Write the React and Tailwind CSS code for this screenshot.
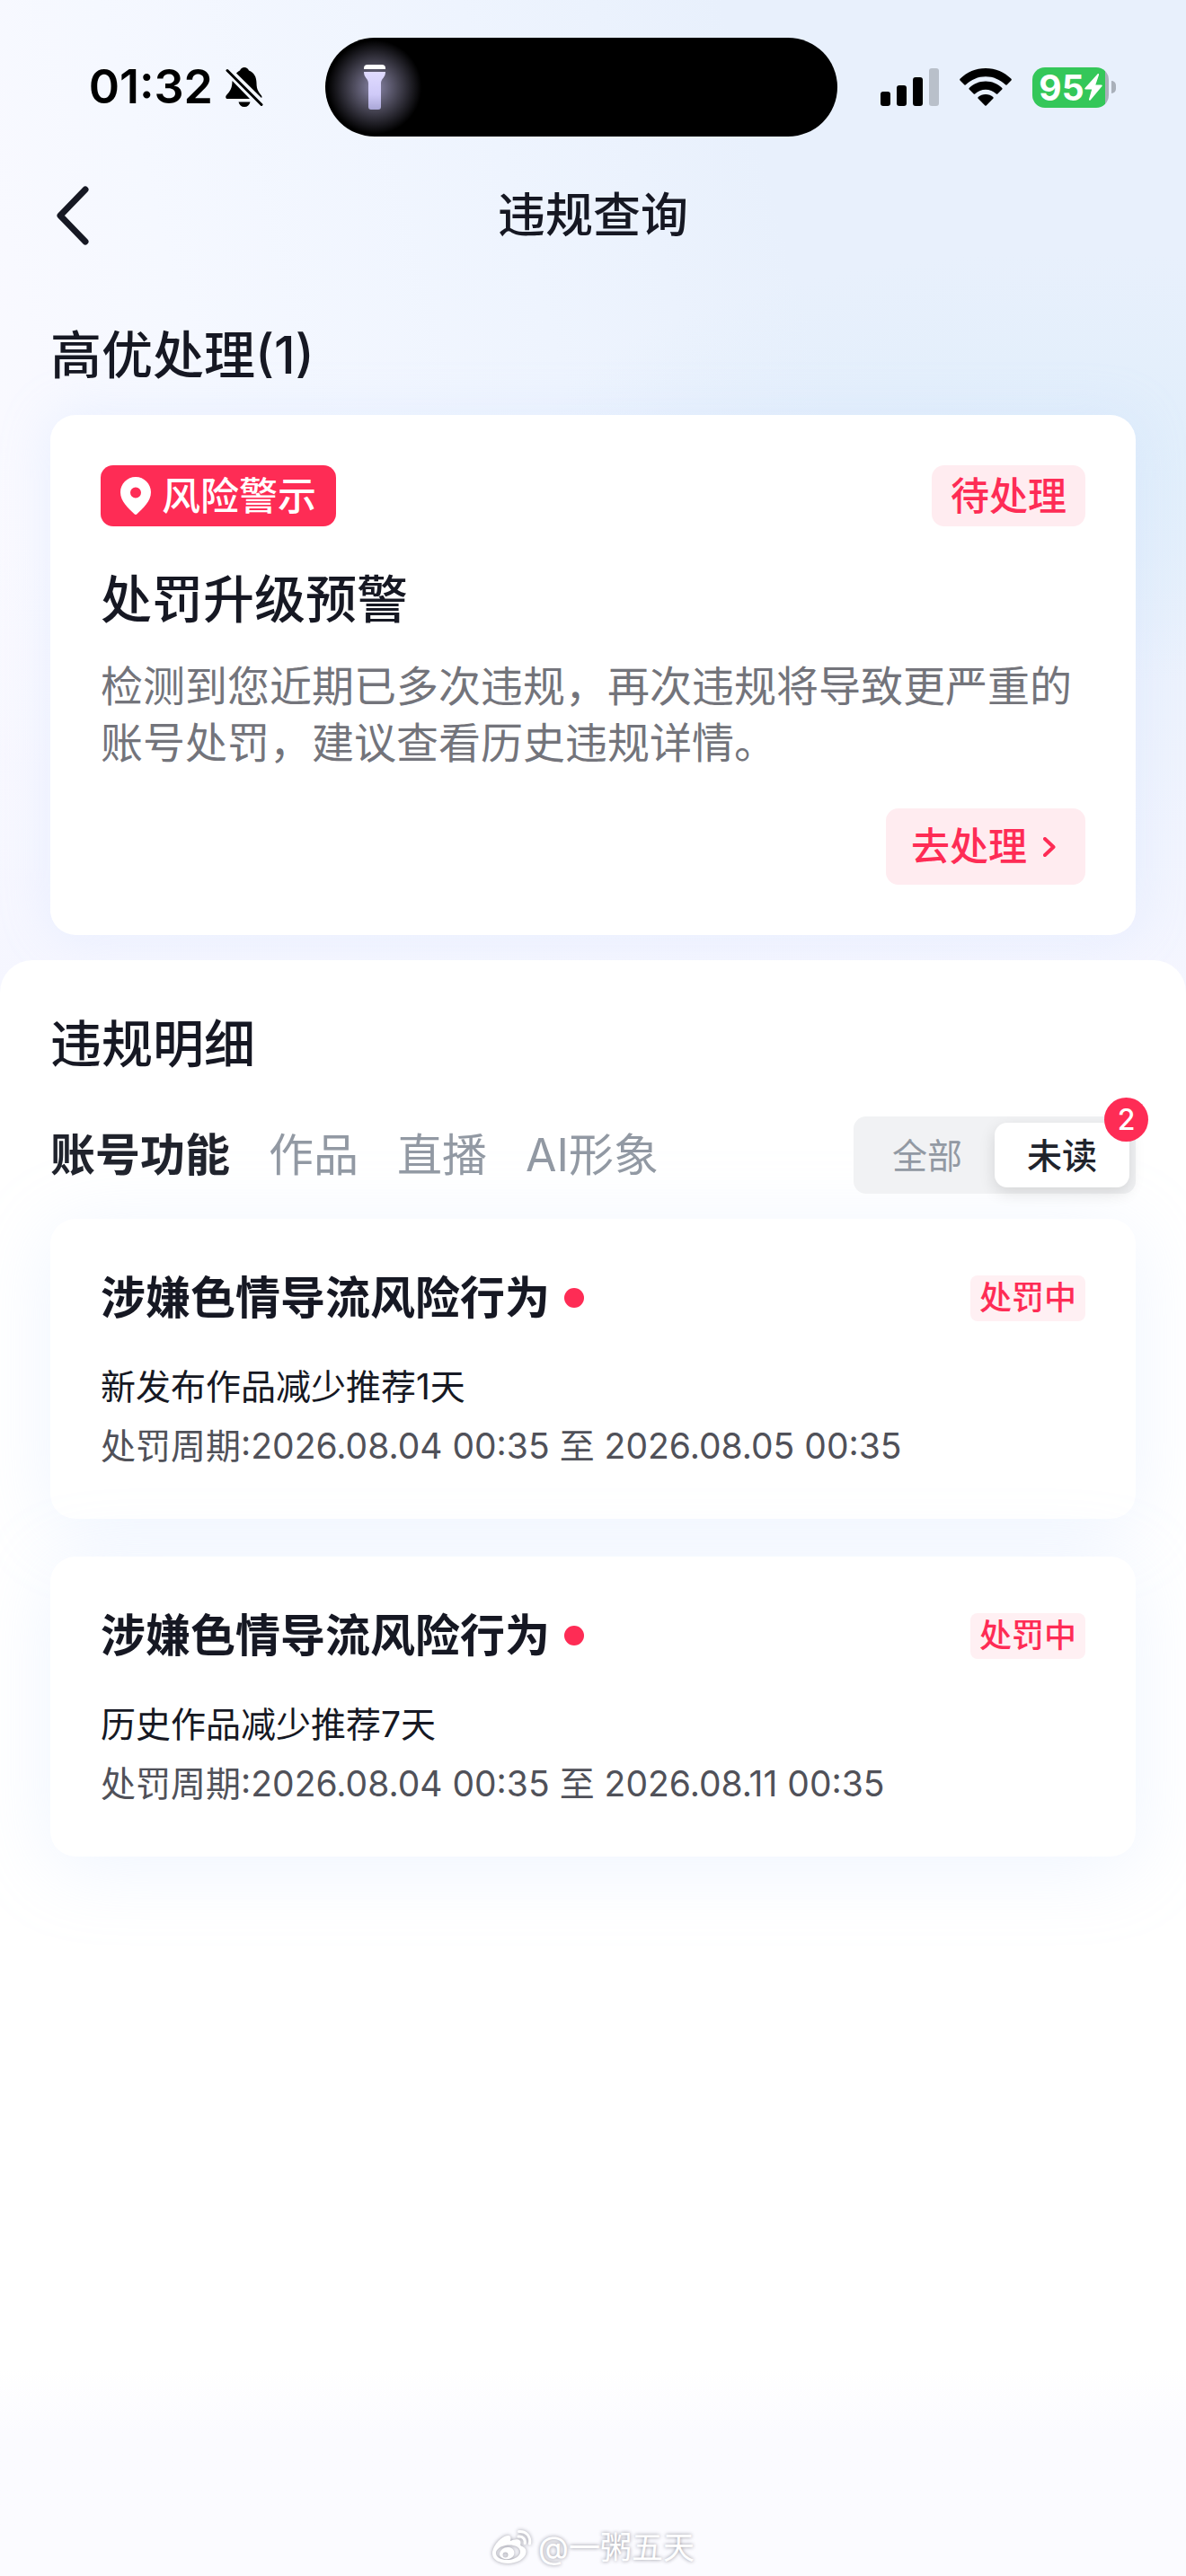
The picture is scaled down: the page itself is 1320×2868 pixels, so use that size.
import React, { useState } from 'react';

const RECORDS = [
  {
    id: 1,
    title: '涉嫌色情导流风险行为',
    status: '处罚中',
    unread: true,
    measure: '新发布作品减少推荐1天',
    start: '2026.08.04 00:35',
    end: '2026.08.05 00:35'
  },
  {
    id: 2,
    title: '涉嫌色情导流风险行为',
    status: '处罚中',
    unread: true,
    measure: '历史作品减少推荐7天',
    start: '2026.08.04 00:35',
    end: '2026.08.11 00:35'
  }
];

const TABS = ['账号功能', '作品', '直播', 'AI形象'];

const BellOffIcon = () => (
  <svg viewBox="0 0 42 44" className="h-[44px] w-[42px]" fill="none">
    <path d="M12 6.5C13.5 5 14.5 4 16 3.5C17 1.200 18.600 0 21 0C23.400 0 25 1.200 26 3.500C32 6 34.500 11 34.500 17.500C34.500 25 37 27.500 40 31.500C40.600 32.500 40.700 33.500 40 34Z" fill="#000" />
    <path d="M7.500 15L27 35H2.500C0 35 -0.400 32.500 1 31C4.500 27 7.300 24.500 7.500 15Z" fill="#000" />
    <path d="M14.500 38.500H27.500C26.700 42 24.500 44 21 44C17.500 44 15.300 42 14.500 38.500Z" fill="#000" />
    <path d="M2 3.500L40 41.500" stroke="#000" strokeWidth="3" strokeLinecap="round" />
  </svg>
);

const FlashlightIcon = () => (
  <svg viewBox="0 0 24 50" className="h-[50px] w-[24px]">
    <defs>
      <linearGradient id="torch" x1="0" y1="0" x2="0" y2="1">
        <stop offset="0" stopColor="#e0dbff" />
        <stop offset="0.6" stopColor="#cfcaf8" />
        <stop offset="1" stopColor="#a9a6d6" />
      </linearGradient>
    </defs>
    <path d="M4 0H20A4 4 0 0 1 24 4V5H0V4A4 4 0 0 1 4 0Z" fill="#fff" />
    <path d="M0 8H24C24 15 19 15 19 21V47A3 3 0 0 1 16 50H8A3 3 0 0 1 5 47V21C5 15 0 15 0 8Z" fill="url(#torch)" />
  </svg>
);

const SignalIcon = () => (
  <svg viewBox="0 0 65 42" className="h-[42px] w-[65px]">
    <rect x="0" y="26" width="11" height="16" rx="3" />
    <rect x="18" y="19" width="11" height="23" rx="3" />
    <rect x="36" y="10" width="11" height="32" rx="3" />
    <rect x="54" y="0" width="11" height="42" rx="3" fill="#b9c0ca" />
  </svg>
);

const WifiIcon = () => (
  <svg viewBox="0 0 58 42" className="h-[42px] w-[58px]">
    <path d="M29 0C40 0 50 4.300 57.500 11.800Q58.200 12.600 57.500 13.400L52.500 18.400Q51.800 18.900 51 18.300C45 12.500 37.500 9.200 29 9.200C20.500 9.200 13 12.500 7 18.300Q6.200 18.900 5.500 18.400L0.500 13.400Q-0.200 12.600 0.500 11.800C8 4.300 18 0 29 0Z" />
    <path d="M29 14.500C36 14.500 42.300 17.200 47.300 22Q48 22.800 47.300 23.600L42.300 28.600Q41.500 29.100 40.800 28.600C37.400 25.500 33.400 23.800 29 23.800C24.600 23.800 20.600 25.500 17.200 28.600Q16.500 29.100 15.700 28.600L10.700 23.600Q10 22.800 10.700 22C15.700 17.200 22 14.500 29 14.500Z" />
    <path d="M29 29C32.200 29 35 30.100 37.300 32.100Q38 32.900 37.300 33.700L29.700 41.400Q29 42.100 28.300 41.400L20.700 33.700Q20 32.900 20.700 32.100C23 30.100 25.800 29 29 29Z" />
  </svg>
);

const BatteryIcon = () => (
  <div className="flex items-center gap-[3px]">
    <div className="flex h-[45px] w-[85px] items-center justify-center rounded-[14px] bg-linear-to-r from-[#34c759] from-95% to-[#a9b0ba] to-95% text-[39px] leading-[45px] font-bold text-white">
      95
      <svg viewBox="0 0 20 30" className="h-[30px] w-[20px]" fill="#fff">
        <path d="M14.500 0.500L0.500 16C0 16.800 0.300 17.500 1.200 17.500H8.200L5 28.500C4.800 30 6 30.200 6.800 29.300L19.500 14C20 13.200 19.700 12.500 18.800 12.500H12.300L16 1.500C16.300 0 15.300 -0.300 14.500 0.500Z" />
      </svg>
    </div>
    <div className="h-[14px] w-[5px] rounded-r-full bg-[#a9b0ba]" />
  </div>
);

const PinIcon = () => (
  <svg viewBox="0 0 34 42" className="h-[42px] w-[34px]">
    <path fillRule="evenodd" d="M17 0C26.400 0 34 7.600 34 17C34 27 25 35 18.500 41.200C17.500 42.200 16.500 42.200 15.500 41.200C9 35 0 27 0 17C0 7.600 7.600 0 17 0ZM17 11.500A6 6 0 1 0 17 23.500A6 6 0 1 0 17 11.500Z" fill="#fff" />
  </svg>
);

const WeiboIcon = () => (
  <svg viewBox="0 0 46 40" className="h-[40px] w-[46px] drop-shadow-[0_0_2px_#9a9aa4]">
    <path fillRule="evenodd" d="M1 27C1 19 10 8 18 7C21.500 6.600 22 9.500 21 13C26 10.500 33 10 32.500 15.500C32.400 17 31.500 18 33.500 18.700C37 20 39 22 38.500 26C37.500 33 28 38 18.500 38C9 38 1 34 1 27ZM5 27C5.500 32 12 34.500 19 34C26.500 33.500 32.500 29.500 32 24.500C31.500 19.500 25 17 18 17.600C10.500 18.300 4.500 22.500 5 27Z" fill="#fff" />
    <path fillRule="evenodd" d="M9 27.500C9.500 22.500 14.500 19.500 19 20C24 20.500 26.500 24.500 25 28.500C23.500 32.500 18.500 34 14.500 33C11 32 8.800 30 9 27.500ZM12.500 28.500A3 3 0 1 0 18.500 28.500A3 3 0 1 0 12.500 28.500Z" fill="#fff" />
    <path d="M30 8C34.500 7.500 38 11 37.200 15.500M30.500 2.500C38.500 1.500 44 8 42.500 16" fill="none" stroke="#fff" strokeWidth="3" strokeLinecap="round" />
  </svg>
);

const StatusBar = () => (
  <div className="grid grid-cols-[1fr_auto_1fr] items-center pt-[42px] pr-[26px]">
    <div className="flex items-center justify-end gap-[14px] pr-[69px] text-[52px] leading-none font-semibold text-black">
      01:32
      <BellOffIcon />
    </div>
    <div className="flex h-[110px] w-[570px] items-center overflow-hidden rounded-full bg-black">
      <div className="flex h-full w-[110px] items-center justify-center bg-[radial-gradient(closest-side,#8a86a8_0%,#4a4858_45%,transparent_95%)]">
        <FlashlightIcon />
      </div>
    </div>
    <div className="flex items-center gap-[23px] pl-[48px]">
      <SignalIcon />
      <WifiIcon />
      <BatteryIcon />
    </div>
  </div>
);

const NavBar = () => (
  <header className="grid grid-cols-[1fr_auto_1fr] items-center px-14 pt-[48px]">
    <button type="button" aria-label="返回" className="flex h-[80px] w-[80px] items-center pl-[7px]">
      <svg viewBox="0 0 36 66" className="h-[66px] w-[36px]" fill="none">
        <path d="M32 4L4 33L32 62" stroke="#161823" strokeWidth="7" strokeLinecap="round" strokeLinejoin="round" />
      </svg>
    </button>
    <h1 className="text-[53px] leading-[80px] font-medium">违规查询</h1>
  </header>
);

const PriorityCard = () => (
  <section className="px-14 pt-[76px]">
    <h2 className="text-[57px] leading-[80px] font-medium">高优处理(1)</h2>
    <article className="mt-[26px] rounded-[28px] bg-white p-14 shadow-[0_0_56px_rgba(190,214,255,0.25)]">
      <div className="flex items-center justify-between">
        <span className="flex h-[68px] items-center gap-[12px] rounded-[14px] bg-[#fe2c55] px-[22px] text-[43px] leading-none font-medium text-white">
          <PinIcon />
          风险警示
        </span>
        <span className="flex h-[68px] items-center rounded-[14px] bg-[#ffecf0] px-[21px] text-[43px] leading-none font-medium text-[#fe2c55]">
          待处理
        </span>
      </div>
      <h3 className="mt-[42px] text-[57px] leading-[80px] font-medium">处罚升级预警</h3>
      <p className="mt-[24px] text-[47px] leading-[63px] text-[#73747b]">
        检测到您近期已多次违规，再次违规将导致更严重的账号处罚，建议查看历史违规详情。
      </p>
      <div className="mt-[42px] flex justify-end">
        <button type="button" className="flex h-[85px] items-center gap-[18px] rounded-[14px] bg-[#ffecf0] pr-[33px] pl-[28px] text-[43px] leading-none font-medium text-[#fe2c55]">
          去处理
          <svg viewBox="0 0 14 22" className="h-[22px] w-[14px]" fill="none">
            <path d="M2 2L11.500 11L2 20" stroke="currentColor" strokeWidth="4" strokeLinecap="round" strokeLinejoin="round" />
          </svg>
        </button>
      </div>
    </article>
  </section>
);

const RecordCard = ({ record }) => (
  <article className="rounded-[28px] bg-white px-14 pt-[48px] pb-[48px] shadow-[0_12px_84px_rgba(190,214,255,0.25)]">
    <div className="flex items-center justify-between">
      <h3 className="flex items-center gap-[16px] text-[50px] leading-[80px] font-bold">
        {record.title}
        {record.unread && <span className="h-[22px] w-[22px] rounded-full bg-[#fe2c55]" />}
      </h3>
      <span className="flex h-[51px] items-center rounded-[8px] bg-[#fff0f3] px-[10px] text-[36px] leading-none font-medium text-[#fe2c55]">
        {record.status}
      </span>
    </div>
    <p className="mt-[26px] text-[39px] leading-[66px]">{record.measure}</p>
    <p className="text-[39px] leading-[66px] text-[#505159]">
      处罚周期:{record.start} 至 {record.end}
    </p>
  </article>
);

const App = () => {
  const [tab, setTab] = useState('账号功能');
  const [filter, setFilter] = useState('unread');

  const records = RECORDS.filter((r) => filter === 'all' || r.unread);

  return (
    <div className="flex min-h-screen flex-col bg-[#fbfbff] font-[Inter,'Noto_Sans_CJK_SC',sans-serif] text-[#161823]">
      {/* Top area with the soft blue wash */}
      <div className="bg-[radial-gradient(ellipse_600px_240px_at_90%_520px,#e0eefb_0%,transparent_100%),linear-gradient(to_bottom,transparent_55%,#f5f6ff_100%),linear-gradient(75deg,#fcfaff_0%,#f5f8ff_25%,#eef4fe_50%,#e8f0fc_68%)] pb-[64px]">
        <StatusBar />
        <NavBar />
        <PriorityCard />
      </div>

      <main className="-mt-[36px] grow rounded-t-[36px] bg-linear-to-b from-white from-90% to-[#fbfbff] to-94% px-14 pt-[54px]">
        <h2 className="text-[57px] leading-[80px] font-medium">违规明细</h2>

        {/* Tabs and read filter */}
        <div className="mt-[40px] flex items-center justify-between">
          <div className="flex items-center gap-[43px] text-[50px] leading-[80px]">
            {TABS.map((name) => (
              <button
                key={name}
                type="button"
                onClick={() => setTab(name)}
                className={tab === name ? 'font-semibold text-[#20232c]' : 'text-[#9299a3]'}
              >
                {name}
              </button>
            ))}
          </div>
          <div className="relative flex h-[86px] items-center rounded-[14px] bg-[#f1f2f4] p-[7px] text-[39px] leading-none">
            <button
              type="button"
              onClick={() => setFilter('all')}
              className={filter === 'all' ? 'h-full w-[150px] rounded-[14px] bg-white font-medium text-[#20232c] shadow-[0_6px_18px_rgba(0,0,0,0.12)]' : 'h-full w-[150px] text-[#9299a3]'}
            >
              全部
            </button>
            <button
              type="button"
              onClick={() => setFilter('unread')}
              className={filter === 'unread' ? 'h-full w-[150px] rounded-[14px] bg-white font-medium text-[#20232c] shadow-[0_6px_18px_rgba(0,0,0,0.12)]' : 'h-full w-[150px] text-[#9299a3]'}
            >
              未读
            </button>
            <span className="absolute -top-[21px] -right-[14px] flex h-[49px] w-[49px] items-center justify-center rounded-full bg-[#fe2c55] text-[32px] font-medium text-white">
              {RECORDS.filter((r) => r.unread).length}
            </span>
          </div>
        </div>

        <div className="mt-[28px] flex flex-col gap-[42px]">
          {records.map((record) => (
            <RecordCard key={record.id} record={record} />
          ))}
        </div>
      </main>

      <footer className="flex items-center justify-center gap-[6px] pb-[8px] text-[35px] leading-[48px] text-white [text-shadow:0_0_4px_#8e8e98]">
        <WeiboIcon />
        @一粥五天
      </footer>
    </div>
  );
};

export default App;
